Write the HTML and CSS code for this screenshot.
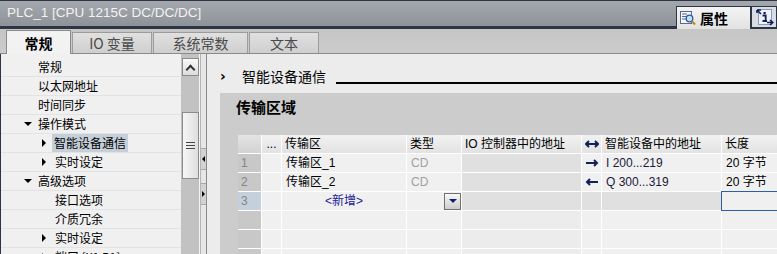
FILE: index.html
```html
<!DOCTYPE html>
<html lang="zh">
<head>
<meta charset="utf-8">
<title>PLC_1</title>
<link rel="stylesheet" href="styles.css">
</head>
<body>
<div class="app">
  <div class="titlebar">
    <div class="title">PLC_1 [CPU 1215C DC/DC/DC]</div>
    <div class="ptabs">
      <div class="ptab active">
        <svg class="picon" width="16" height="16" viewBox="0 0 16 16">
          <rect x="0.5" y="1.5" width="11" height="12" fill="#f4f6fa" stroke="#5a6a8a"/>
          <line x1="2" y1="4" x2="7" y2="4" stroke="#5a6a8a"/>
          <line x1="2" y1="6.5" x2="6" y2="6.5" stroke="#5a6a8a"/>
          <line x1="2" y1="9" x2="6" y2="9" stroke="#5a6a8a"/>
          <circle cx="9.5" cy="8.5" r="3.3" fill="#bfe0f5" stroke="#2a5aa0" stroke-width="1.3"/>
          <line x1="11.8" y1="11" x2="15" y2="14.5" stroke="#c08020" stroke-width="2"/>
        </svg>
        <span>属性</span>
      </div>
      <div class="ptab info">
        <svg width="18" height="18" viewBox="0 0 18 18">
          <rect x="2.5" y="1.5" width="13" height="15" fill="#eef2fa" stroke="#8a9ab8"/>
          <path d="M1 2 L5 2 M1 2 L1 5 M1 2 L5 6" stroke="#10205a" stroke-width="1.6" fill="none"/>
          <rect x="7.5" y="4" width="2.2" height="2" fill="#10205a"/>
          <path d="M6.5 7.5 H9.7 V13 H11 M6.5 13 H9" stroke="#10205a" stroke-width="1.8" fill="none"/>
          <path d="M11 14.5 H16.5 M14 12 L16.8 14.5 L14 17" stroke="#10205a" stroke-width="1.6" fill="none"/>
        </svg>
      </div>
    </div>
  </div>

  <div class="tabrow">
    <div class="tab active">常规</div>
    <div class="tab">IO 变量</div>
    <div class="tab">系统常数</div>
    <div class="tab">文本</div>
  </div>

  <div class="main">
    <div class="sidebar">
      <ul class="tree">
        <li class="item l0"><span class="tw"></span><span class="lbl">常规</span></li>
        <li class="item l0"><span class="tw"></span><span class="lbl">以太网地址</span></li>
        <li class="item l0"><span class="tw"></span><span class="lbl">时间同步</span></li>
        <li class="item l0"><span class="tw"><i class="down"></i></span><span class="lbl">操作模式</span></li>
        <li class="item l1"><span class="tw"><i class="right"></i></span><span class="lbl sel">智能设备通信</span></li>
        <li class="item l1"><span class="tw"><i class="right"></i></span><span class="lbl">实时设定</span></li>
        <li class="item l0"><span class="tw"><i class="down"></i></span><span class="lbl">高级选项</span></li>
        <li class="item l1"><span class="tw"></span><span class="lbl">接口选项</span></li>
        <li class="item l1"><span class="tw"></span><span class="lbl">介质冗余</span></li>
        <li class="item l1"><span class="tw"><i class="right"></i></span><span class="lbl">实时设定</span></li>
        <li class="item l1"><span class="tw"><i class="right"></i></span><span class="lbl">端口 [X1 P1]</span></li>
      </ul>
    </div>
    <div class="vscroll">
      <div class="sbtn"><i class="up"></i></div>
      <div class="thumb"><span class="grip"></span></div>
    </div>
    <div class="splitter">
      <div class="sbox first"><i class="left"></i></div>
      <div class="sbox"><i class="rt"></i></div>
    </div>
    <div class="content">
      <div class="head">
        <span class="chev">›</span>
        <span class="htitle">智能设备通信</span>
        <span class="rule"></span>
      </div>
      <div class="section">
        <div class="stitle">传输区域</div>
        <div class="grid">
          <div class="c hd num"></div>
          <div class="c hd ctr">...</div>
          <div class="c hd">传输区</div>
          <div class="c hd">类型</div>
          <div class="c hd">IO 控制器中的地址</div>
          <div class="c hd ctr">
            <svg width="14" height="8" viewBox="0 0 14 8"><path d="M1 4 H13 M4 1 L1 4 L4 7 M10 1 L13 4 L10 7" stroke="#14205a" stroke-width="2" fill="none"/></svg>
          </div>
          <div class="c hd">智能设备中的地址</div>
          <div class="c hd">长度</div>

          <div class="c num">1</div>
          <div class="c"></div>
          <div class="c">传输区_1</div>
          <div class="c dim">CD</div>
          <div class="c ro"></div>
          <div class="c ctr">
            <svg width="14" height="8" viewBox="0 0 14 8"><path d="M1 4 H12 M9 1 L12 4 L9 7" stroke="#14205a" stroke-width="2" fill="none"/></svg>
          </div>
          <div class="c addr">I 200...219</div>
          <div class="c">20 字节</div>

          <div class="c num">2</div>
          <div class="c"></div>
          <div class="c">传输区_2</div>
          <div class="c dim">CD</div>
          <div class="c ro"></div>
          <div class="c ctr">
            <svg width="14" height="8" viewBox="0 0 14 8"><path d="M2 4 H13 M5 1 L2 4 L5 7" stroke="#14205a" stroke-width="2" fill="none"/></svg>
          </div>
          <div class="c addr">Q 300...319</div>
          <div class="c">20 字节</div>

          <div class="c num cur">3</div>
          <div class="c"></div>
          <div class="c ctr add">&lt;新增&gt;</div>
          <div class="c end"><span class="dd"><i class="ddarrow"></i></span></div>
          <div class="c ro"></div>
          <div class="c ro"></div>
          <div class="c ro"></div>
          <div class="c focus"></div>

          <div class="c num"></div><div class="c"></div><div class="c"></div><div class="c"></div><div class="c lt"></div><div class="c"></div><div class="c"></div><div class="c"></div>
          <div class="c num"></div><div class="c"></div><div class="c"></div><div class="c"></div><div class="c lt"></div><div class="c"></div><div class="c"></div><div class="c"></div>
          <div class="c num"></div><div class="c"></div><div class="c"></div><div class="c"></div><div class="c lt"></div><div class="c"></div><div class="c"></div><div class="c"></div>
        </div>
      </div>
    </div>
  </div>
</div>
</body>
</html>
```

FILE: styles.css
```css
* { box-sizing: border-box; margin: 0; padding: 0; }
html, body { width: 777px; height: 254px; overflow: hidden; }
body {
  background: #ececec;
  font-family: "Liberation Sans", "Noto Sans CJK SC", sans-serif;
  font-size: 12px;
  color: #000;
}
.app { width: 777px; height: 254px; display: flex; flex-direction: column; overflow: hidden; }

/* title bar */
.titlebar {
  height: 29px;
  flex: none;
  display: flex;
  justify-content: space-between;
  align-items: flex-end;
  background: linear-gradient(to bottom, #2d3442 0, #2d3442 1px, #a4a8ae 1px, #8e939a 26px, #2d3442 26px, #2d3442 29px);
}
.title {
  align-self: flex-start;
  height: 26px;
  line-height: 25px;
  padding-left: 7px;
  color: #f2f2f2;
  font-size: 13.5px;
}
.ptabs { display: flex; align-items: flex-end; }
.ptab {
  height: 23px;
  display: flex;
  align-items: center;
  border: 1px solid #2d3442;
  border-bottom: none;
}
.ptab.active {
  width: 75px;
  background: linear-gradient(to bottom, #f4f4f4, #e2e2e2);
  padding-left: 3px;
  gap: 4px;
  font-family: "Noto Sans CJK SC", sans-serif;
  font-weight: bold;
  font-size: 14px;
}
.ptab.info {
  width: 26px;
  height: 21px;
  margin-bottom: 2px;
  background: #d8dce4;
  padding-left: 4px;
}

/* tab row */
.tabrow {
  height: 25px;
  flex: none;
  display: flex;
  align-items: flex-end;
  padding-left: 6px;
  gap: 1px;
  background: linear-gradient(to bottom, #c6c6c6 0, #cbcbcb 24px, #8a8a8a 24px);
  font-family: "Noto Sans CJK SC", sans-serif;
  font-size: 14px;
}
.tab {
  height: 21px;
  margin-bottom: 1px;
  width: 80px;
  display: flex;
  align-items: center;
  justify-content: center;
  border: 1px solid #9c9c9c;
  border-bottom: none;
  background: linear-gradient(to bottom, #e0e0e0, #cfcfcf);
  color: #4a4a4a;
}
.tab:nth-child(3) { width: 95px; }
.tab:nth-child(4) { width: 70px; }
.tab.active {
  width: 65px;
  height: 24px;
  margin-bottom: 0;
  background: #f2f2f2;
  border-color: #8a8a8a;
  color: #000;
  font-weight: bold;
}

/* main */
.main { flex: 1; display: flex; min-height: 0; }
.sidebar {
  width: 181px;
  flex: none;
  background: #f0f0f0;
  border-left: 1px solid #2d3442;
  padding-top: 4px;
  overflow: hidden;
  font-family: "Noto Sans CJK SC", sans-serif;
}
.tree { list-style: none; }
.item {
  height: 19px;
  border-bottom: 1px solid #e3e3e3;
  display: flex;
  align-items: center;
  font-size: 12px;
  white-space: nowrap;
}
.item.l0 { padding-left: 23px; }
.item.l1 { padding-left: 40px; }
.tw { width: 13px; height: 18px; display: flex; align-items: center; flex: none; }
.lbl { height: 18px; line-height: 18px; padding: 0 1px; }
.lbl.sel { background: #c5cfd9; padding: 0 2px; margin-left: -2px; }
.down { display: block; width: 0; height: 0; border-left: 4px solid transparent; border-right: 4px solid transparent; border-top: 4px solid #000; }
.right { display: block; width: 0; height: 0; border-top: 4px solid transparent; border-bottom: 4px solid transparent; border-left: 4px solid #000; margin-left: 1px; }

.vscroll {
  width: 19px;
  flex: none;
  background: #c2c2c2;
  padding: 4px 0 0 1px;
  border-right: 1px solid #f4f4f4;
}
.sbtn {
  height: 18px;
  width: 17px;
  border: 1px solid #8c8c8c;
  background: linear-gradient(to bottom, #fafafa, #dcdcdc);
  display: flex;
  align-items: center;
  justify-content: center;
}
.up { display: block; width: 7px; height: 7px; border-left: 2px solid #333; border-top: 2px solid #333; transform: rotate(45deg); margin-top: 4px; }
.thumb {
  margin-top: 36px;
  height: 67px;
  width: 17px;
  border: 1px solid #8c8c8c;
  background: linear-gradient(to right, #f6f6f6, #dedede);
  display: flex;
  align-items: center;
  justify-content: center;
}
.grip { display: block; width: 9px; height: 7px; border-top: 1px solid #444; border-bottom: 1px solid #444; background: linear-gradient(to bottom, transparent 2px, #444 2px, #444 3px, transparent 3px); }

.splitter {
  width: 7px;
  flex: none;
  background: #e6e6e6;
  border-left: 1px solid #b4b4b4;
  border-right: 1px solid #8a8a8a;
}
.sbox {
  height: 22px;
  border-top: 1px solid #a8a8a8;
  border-bottom: 1px solid #a8a8a8;
  background: #d2d2d2;
  display: flex;
  align-items: center;
  justify-content: center;
  margin-top: 13px;
}
.sbox.first { margin-top: 94px; }
.left { display: block; width: 0; height: 0; border-top: 3px solid transparent; border-bottom: 3px solid transparent; border-right: 3px solid #000; }
.rt { display: block; width: 0; height: 0; border-top: 3px solid transparent; border-bottom: 3px solid transparent; border-left: 3px solid #000; }

/* content */
.content {
  flex: 1;
  min-width: 0;
  background: #ececec;
  padding-top: 12px;
  display: flex;
  flex-direction: column;
  overflow: hidden;
}
.head {
  height: 20px;
  display: flex;
  align-items: flex-end;
  padding-left: 13px;
  font-family: "Noto Sans CJK SC", sans-serif;
}
.chev { width: 22px; font-size: 14px; line-height: 20px; font-weight: bold; font-family: "DejaVu Sans", sans-serif; }
.htitle { font-size: 14px; line-height: 20px; }
.rule { flex: 1; height: 2px; background: #000; margin: 0 0 2px 10px; }

.section {
  flex: 1;
  margin: 7px 0 0 13px;
  background: #cccccc;
  padding: 4px 0 0 16px;
  overflow: hidden;
}
.stitle {
  font-family: "Noto Sans CJK SC", sans-serif;
  font-weight: bold;
  font-size: 15px;
  line-height: 20px;
}
.grid {
  margin: 18px 0 0 2px;
  display: grid;
  grid-template-columns: 23px 19px 124px 54px 119px 19px 119px 70px;
  grid-auto-rows: 18px;
  gap: 1px;
  background: #ffffff;
  width: max-content;
}
.c {
  background: #f0f0f0;
  padding-left: 4px;
  line-height: 18px;
  white-space: nowrap;
  display: flex;
  align-items: center;
  font-family: "Liberation Sans", "Noto Sans CJK SC", sans-serif;
}
.c.hd { background: linear-gradient(to bottom, #f2f2f2, #e2e2e2); padding-left: 3px; }
.c.num { background: #c8c8c8; color: #858585; padding-left: 3px; }
.c.hd.num { background: linear-gradient(to bottom, #e4e4e4, #d2d2d2); }
.c.num.cur { background: #c4d0dc; }
.c.ctr { justify-content: center; padding-left: 0; }
.c.dim { color: #a0a0a0; }
.c.ro { background: #e0e0e0; }
.c.lt { background: #ececec; }
.c.addr { color: #1a1a3a; }
.c.add { color: #222296; }
.c.end { justify-content: flex-end; padding-left: 0; }
.c.focus { outline: 1px solid #2f5ea8; }
.dd {
  width: 17px;
  height: 17px;
  border: 1px solid #707070;
  background: linear-gradient(to bottom, #f8f8f8, #cdcdcd);
  display: flex;
  align-items: center;
  justify-content: center;
}
.ddarrow { display: block; width: 0; height: 0; border-left: 4px solid transparent; border-right: 4px solid transparent; border-top: 4px solid #10207a; }
```
